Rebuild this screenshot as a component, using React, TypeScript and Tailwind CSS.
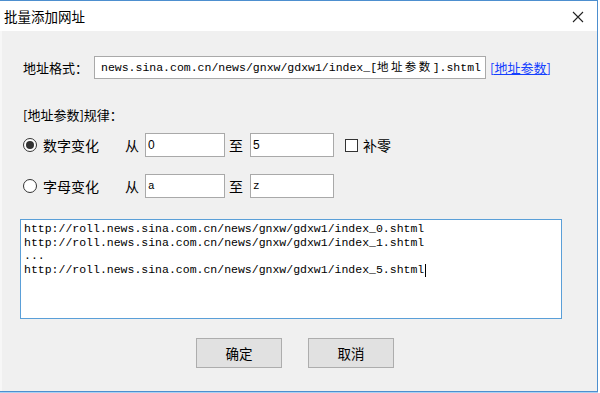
import React from "react";

const cjk = "font-['Microsoft_YaHei','Noto_Sans_CJK_SC',sans-serif]";
const mono = "font-['Liberation_Mono','Noto_Sans_CJK_SC',monospace]";

function Radio({ checked }: { checked?: boolean }) {
  return (
    <span className="w-[14px] h-[14px] rounded-full border border-[#333] bg-white flex items-center justify-center shrink-0">
      {checked && <span className="w-[8px] h-[8px] rounded-full bg-[#333]" />}
    </span>
  );
}

function Field({ value, width, isMono }: { value: string; width: string; isMono?: boolean }) {
  return (
    <div
      className={`${width} h-[24px] border border-[#a9a9a9] bg-white flex items-center pl-[2px] text-black ${
        isMono ? `${mono} text-[11px]` : "font-['Liberation_Sans',sans-serif] text-[12px]"
      }`}
    >
      {value}
    </div>
  );
}

function RangeRow({ label, checked, from, to, isMono, extra }: {
  label: string;
  checked?: boolean;
  from: string;
  to: string;
  isMono?: boolean;
  extra?: boolean;
}) {
  return (
    <div className="flex items-center pl-[21px] h-[24px]">
      <Radio checked={checked} />
      <span className="ml-[6px] w-[56px] text-[14px] leading-[18px]">{label}</span>
      <span className="ml-[26px] w-[15px] text-[14px] leading-[18px]">从</span>
      <div className="ml-[5px]">
        <Field value={from} width="w-[80px]" isMono={isMono} />
      </div>
      <span className="ml-[4px] w-[15px] text-[14px] leading-[18px]">至</span>
      <div className="ml-[6px]">
        <Field value={to} width="w-[84px]" isMono={isMono} />
      </div>
      {extra && (
        <>
          <span className="ml-[11px] w-[13px] h-[13px] border border-[#333] bg-white shrink-0" />
          <span className="ml-[5px] text-[14px] leading-[18px]">补零</span>
        </>
      )}
    </div>
  );
}

export default function App() {
  const lines = [
    "http://roll.news.sina.com.cn/news/gnxw/gdxw1/index_0.shtml",
    "http://roll.news.sina.com.cn/news/gnxw/gdxw1/index_1.shtml",
    "...",
  ];

  return (
    <div className={`w-[600px] h-[393px] bg-white ${cjk} text-black`}>
      <div className="w-[598px] h-[393px] border-b border-[#a9d1f2]">
        <div className="h-[392px] flex flex-col border-t border-r border-b border-[#4d8fcf]">
          {/* title bar */}
          <div className="h-[30px] bg-white flex items-center justify-between pl-[4px] pr-[13px] shrink-0">
            <span className="text-[13.5px] leading-[18px]">批量添加网址</span>
            <svg width="12" height="12" viewBox="0 0 12 12" className="mt-[1px]">
              <path d="M1 1 L11 11 M11 1 L1 11" stroke="#222" strokeWidth="1.1" />
            </svg>
          </div>

          {/* body */}
          <div className="flex-1 bg-[#f0f0f0] border-l-2 border-[#f7f7f7] flex flex-col">
            <div className="mt-[25px] flex items-center h-[23px] pl-[21px]">
              <span className="w-[66px] text-[13px] leading-[18px]">地址格式：</span>
              <div className={`ml-[5px] w-[392px] h-[23px] border border-[#a9a9a9] bg-white flex items-center pl-[6px] ${mono} text-[11.5px] whitespace-nowrap overflow-hidden`}>
                news.sina.com.cn/news/gnxw/gdxw1/index_[
                <span className="tracking-[2.4px]">地址参数</span>].shtml
              </div>
              <span className="ml-[4px] text-[13px] leading-[18px] text-[#1440ff] underline">[地址参数]</span>
            </div>

            <div className="mt-[27px] pl-[21px] text-[13px] leading-[18px]">[地址参数]规律：</div>

            <div className="mt-[9px]">
              <RangeRow label="数字变化" checked from="0" to="5" extra />
            </div>
            <div className="mt-[17px]">
              <RangeRow label="字母变化" from="a" to="z" isMono />
            </div>

            <div className={`mt-[21px] ml-[18px] w-[542px] h-[100px] border border-[#5a9fd8] bg-white pl-[3px] pt-[2px] ${mono} text-[11.5px] leading-[13.7px] whitespace-pre`}>
              {lines.map((l) => (
                <div key={l}>{l}</div>
              ))}
              <div>
                http://roll.news.sina.com.cn/news/gnxw/gdxw1/index_5.shtml
                <span className="inline-block w-px h-[13px] bg-black align-middle ml-[1px]" />
              </div>
            </div>

            <div className="mt-[19px] flex pl-[194px] gap-[26px]">
              <button className="w-[86px] h-[30px] bg-[#e1e1e1] border border-[#adadad] text-[13.5px] leading-[18px]">确定</button>
              <button className="w-[86px] h-[30px] bg-[#e1e1e1] border border-[#adadad] text-[13.5px] leading-[18px]">取消</button>
            </div>
          </div>
        </div>
      </div>
    </div>
  );
}
